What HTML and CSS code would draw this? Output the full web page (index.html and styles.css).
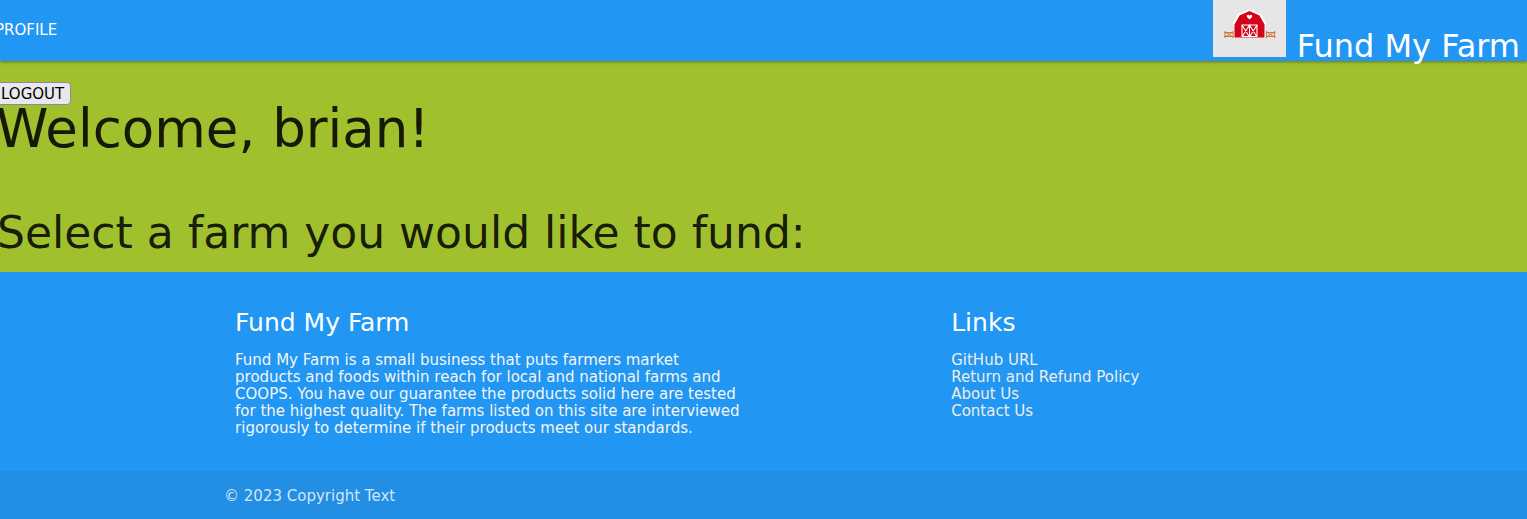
FILE: index.html
```html
<!DOCTYPE html>
<html lang="en">
<head>
<meta charset="utf-8">
<title>Fund My Farm</title>
<link rel="stylesheet" href="styles.css">
</head>
<body>
<nav class="navbar">
  <a class="nav-link" href="#">PROFILE</a>
  <a class="brand" href="#">
    <svg class="logo" viewBox="0 0 73 57" aria-hidden="true">
      <rect width="73" height="57" fill="#e6e6e6"/>
      <path d="M21 37.500V25l-1.500-1 5.500-10 11.500-5L48 14l5.500 10-1.500 1v12.500z" fill="#fff"/>
      <path d="M21.500 37.500V24.500L26.500 15.500l10-4.500 10 4.500L51.500 24.500v13z" fill="#d2041a"/>
      <path d="M36.500 19.500l-2.500-2.500c-1-2 1.500-3 2.500-1.200 1-1.800 3.500-.8 2.500 1.200z" fill="#fff"/>
      <path d="M29 36.500V25h15v11.500zM36.500 25v12M29 25l7.500 12L44 25M29 37l7.500-12L44 37" fill="none" stroke="#fff" stroke-width="1.100"/>
      <path d="M12 31v7M20 31v7M11 32.500h9.500M11 36.500h9.500M12 32l8 5M12 37l8-5M53.500 31v7M61.500 31v7M53 32.500h9.500M53 36.500h9.500M53.500 32l8 5M53.500 37l8-5" fill="none" stroke="#cc7a3c"/>
    </svg>
    <span>Fund My Farm</span>
  </a>
</nav>
<main class="main">
  <button class="logout" type="button">LOGOUT</button>
  <h1 class="welcome">Welcome, brian!</h1>
  <h2 class="prompt">Select a farm you would like to fund:</h2>
</main>
<footer class="footer">
  <div class="container columns">
    <section class="about">
      <h3 class="footer-title">Fund My Farm</h3>
      <p class="footer-text">Fund My Farm is a small business that puts farmers market products and foods within reach for local and national farms and COOPS. You have our guarantee the products solid here are tested for the highest quality. The farms listed on this site are interviewed rigorously to determine if their products meet our standards.</p>
    </section>
    <section class="links">
      <h3 class="footer-title">Links</h3>
      <ul class="link-list">
        <li><a href="#">GitHub URL</a></li>
        <li><a href="#">Return and Refund Policy</a></li>
        <li><a href="#">About Us</a></li>
        <li><a href="#">Contact Us</a></li>
      </ul>
    </section>
  </div>
  <div class="copyright"><div class="container">© 2023 Copyright Text</div></div>
</footer>
</body>
</html>
```
FILE: styles.css
```css
* { box-sizing: border-box; }
body {
  margin: 0;
  background: #a1c02e;
  color: rgba(0, 0, 0, 0.87);
  font: 15px/17px "DejaVu Sans", Verdana, sans-serif;
  overflow-x: hidden;
}
h1, h2, h3, p, ul { margin: 0; padding: 0; font-weight: 400; }
ul { list-style: none; }
a { color: inherit; text-decoration: none; }
.navbar {
  position: relative;
  display: flex;
  justify-content: space-between;
  height: 61px;
  background: #2196f3;
  color: #fff;
  box-shadow: 0 1px 3px rgba(0, 0, 0, 0.4);
}
.nav-link { margin-left: -5px; line-height: 60px; }
.brand { display: flex; gap: 11px; padding-right: 7px; font-size: 32px; line-height: 92px; }
.logo { width: 73px; height: 57px; }
.main { padding: 21px 0 14px; }
.logout {
  display: block;
  margin-left: -6px;
  padding: 2px 6px 0;
  height: 23px;
  border: 1px solid #8b8b98;
  border-radius: 4px;
  background: #e9e9ed;
  color: #000;
  font: inherit;
}
.welcome { margin-left: -4px; font-size: 53px; line-height: 48px; white-space: nowrap; }
.prompt { margin: 55px 0 0 -3px; font-size: 44px; line-height: 50px; white-space: nowrap; }
.footer { background: #2196f3; color: #fff; }
.container { width: 70%; max-width: 1280px; margin-left: calc(15% - 5px); }
.columns { display: flex; padding: 36px 0 34px; }
.about { width: 50%; padding: 0 11px; }
.links { width: 33%; margin-left: 17%; padding: 0 11px; }
.footer-title { font-size: 25px; line-height: 30px; margin-bottom: 14px; }
.footer-text { color: #f5f5f5; }
.link-list { color: #eee; }
.copyright { padding: 17px 0 14px; background: rgba(51, 51, 51, 0.08); color: rgba(255, 255, 255, 0.8); }
```
